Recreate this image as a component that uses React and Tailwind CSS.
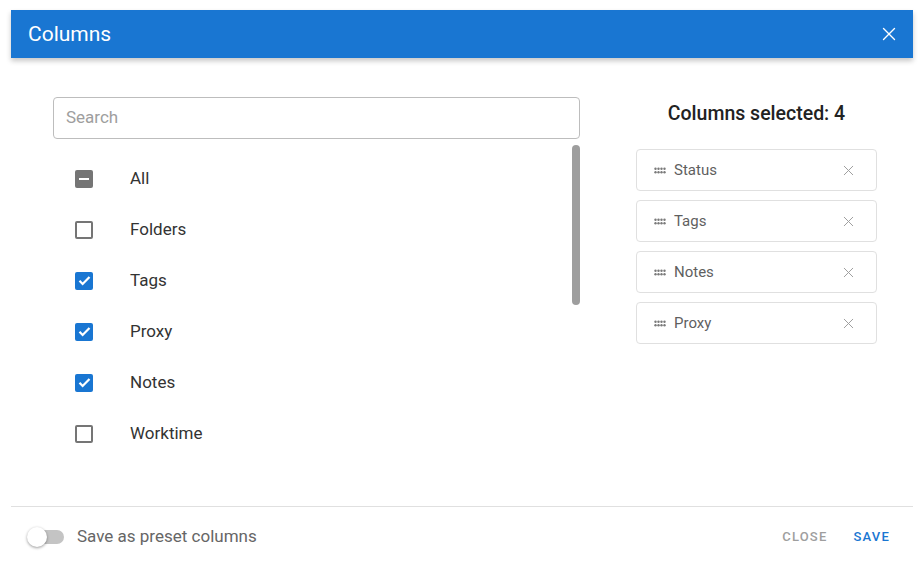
import React from "react";
import { X } from "lucide-react";

const items = [
  { label: "All", state: "some" },
  { label: "Folders", state: "off" },
  { label: "Tags", state: "on" },
  { label: "Proxy", state: "on" },
  { label: "Notes", state: "on" },
  { label: "Worktime", state: "off" },
];

const selected = ["Status", "Tags", "Notes", "Proxy"];

const Box = ({ state }) => {
  if (state === "on")
    return (
      <div className="w-[18px] h-[18px] rounded-[2px] bg-[#1976d2] flex items-center justify-center">
        <svg width="15" height="15" viewBox="0 0 24 24">
          <path d="M4 12.5l5 5L20 6.5" fill="none" stroke="white" strokeWidth="3.6" />
        </svg>
      </div>
    );
  if (state === "some")
    return (
      <div className="w-[18px] h-[18px] rounded-[2px] bg-[#757575] flex items-center justify-center">
        <div className="w-[10px] h-[2px] bg-white"></div>
      </div>
    );
  return <div className="w-[18px] h-[18px] rounded-[2px] border-2 border-[#757575]"></div>;
};

const Dots = () => (
  <svg width="12" height="7" viewBox="0 0 12 7" className="flex-shrink-0">
    {[1.5, 4.5, 7.5, 10.5].map((x) =>
      [1.75, 5.25].map((y) => <circle key={x + "-" + y} cx={x} cy={y} r="1.2" fill="#7a7a7a" />)
    )}
  </svg>
);

export default function App() {
  return (
    <div className="pt-[10px] pl-[11px] bg-white min-h-[568px] font-['Roboto',sans-serif]">
      <div className="w-[902px] bg-white">
        <div className="h-[48px] bg-[#1976d2] flex items-center justify-between pl-[17px] pr-[13px] shadow-[0_3px_5px_rgba(0,0,0,0.22)] relative">
          <span className="text-white text-[21px] pt-[1px]">Columns</span>
          <X className="w-[22px] h-[22px] text-white" strokeWidth={1.5} />
        </div>

        <div className="h-[448px] flex">
          <div className="ml-[42px] w-[527px] pt-[39px] flex flex-col">
            <div className="h-[42px] border border-[#bdbdbd] rounded-[4px] flex items-center px-[12px] text-[17px] text-[#9e9e9e]">
              Search
            </div>
            <div className="flex h-[320px] mt-[6px]">
              <div className="flex-1 pt-[8px] overflow-hidden">
                {items.map((it) => (
                  <div key={it.label} className="h-[51px] flex items-center">
                    <div className="ml-[22px] w-[55px]">
                      <Box state={it.state} />
                    </div>
                    <span className="text-[17px] text-[#333]">{it.label}</span>
                  </div>
                ))}
              </div>
              <div className="w-[8px]">
                <div className="h-[160px] rounded-full bg-[#9e9e9e]"></div>
              </div>
            </div>
          </div>

          <div className="ml-[56px] w-[241px] pt-[44px]">
            <h2 className="text-center text-[19.5px] leading-[24px] font-medium text-[#222]">
              Columns selected: {selected.length}
            </h2>
            <div className="mt-[23px] flex flex-col gap-[9px]">
              {selected.map((s) => (
                <div
                  key={s}
                  className="h-[42px] border border-[#e0e0e0] rounded-[4px] flex items-center pl-[17px] pr-[19px]"
                >
                  <Dots />
                  <span className="ml-[8px] flex-1 text-[15px] text-[#5f5f5f]">{s}</span>
                  <X className="w-[17px] h-[17px] text-[#9e9e9e]" strokeWidth={1.4} />
                </div>
              ))}
            </div>
          </div>
        </div>

        <div className="h-[60px] border-t border-[#e0e0e0] flex items-center pl-[16px] pr-[23px]">
          <div className="relative w-[37px] h-[20px] flex items-center">
            <div className="ml-[3px] w-[34px] h-[14px] rounded-full bg-[#c4c4c4]"></div>
            <div className="absolute left-0 top-0 w-[20px] h-[20px] rounded-full bg-white shadow-[0_1px_3px_rgba(0,0,0,0.4)]"></div>
          </div>
          <span className="ml-[13px] text-[17px] text-[#666]">Save as preset columns</span>
          <div className="ml-auto flex items-center gap-[26px] text-[13px] font-medium tracking-[1.2px]">
            <span className="text-[#9e9e9e]">CLOSE</span>
            <span className="text-[#1976d2]">SAVE</span>
          </div>
        </div>
      </div>
    </div>
  );
}
